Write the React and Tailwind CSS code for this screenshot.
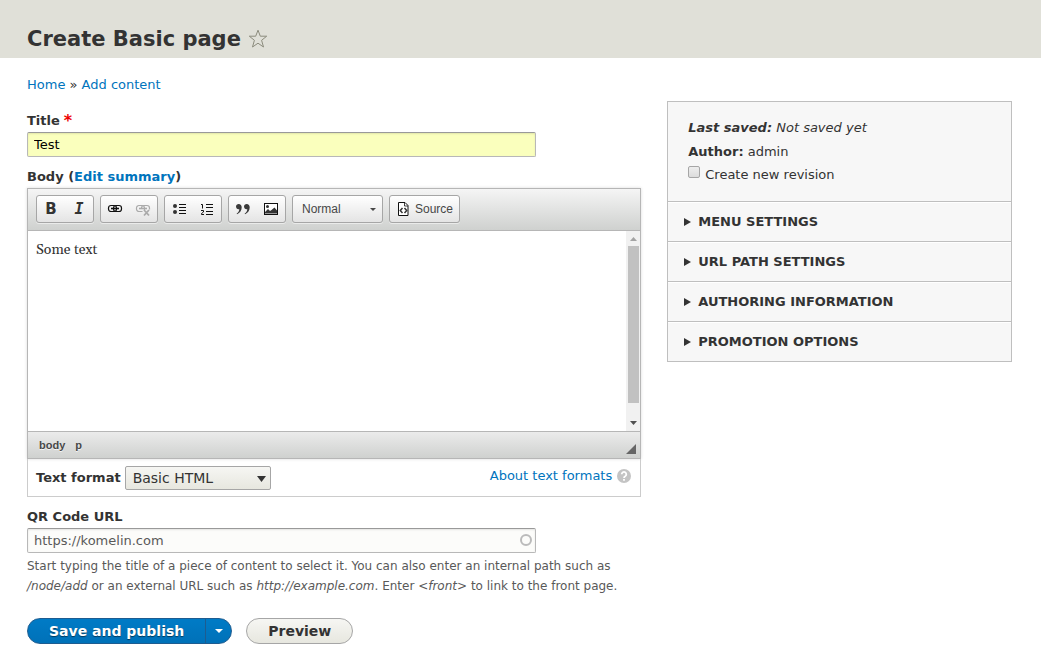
const sections = ['Menu settings', 'URL path settings', 'Authoring information', 'Promotion options']

const inputClass =
  'block w-full h-[25px] px-1.5 border border-[#b8b8b8] border-t-[#999] rounded-xs text-[13px] shadow-[inset_0_1px_2px_rgba(0,0,0,0.1)]'

function Icon({ children }) {
  return (
    <svg className="w-4 h-4" viewBox="0 0 16 16" fill="none" stroke="#111" aria-hidden="true">
      {children}
    </svg>
  )
}

function LinkIcon() {
  return (
    <Icon>
      <rect x="1.5" y="4.5" width="8" height="6" rx="2.5" strokeWidth="1.2" />
      <rect x="6.5" y="4.5" width="8" height="6" rx="2.5" strokeWidth="1.2" />
      <path d="M4 7.5h8" strokeWidth="1.6" />
    </Icon>
  )
}

function UnlinkIcon() {
  return (
    <Icon>
      <g stroke="#aaa" strokeWidth="1.2">
        <path d="M9.5 9V7A2.5 2.5 0 0 0 7 4.5H4a2.5 2.5 0 0 0-2.5 2.5v1A2.5 2.5 0 0 0 4 10.5h3.5" />
        <path d="M6.500 8V7A2.5 2.5 0 0 1 9 4.500h3A2.5 2.5 0 0 1 14.500 7v1.500" />
        <path d="M4 7.5h8" strokeWidth="1.6" />
        <path d="M9 9l5 5.5M14 9l-5 5.5" strokeWidth="1.8" />
      </g>
    </Icon>
  )
}

function BulletIcon() {
  return (
    <Icon>
      <circle cx="4" cy="5" r="2" fill="#333" stroke="none" />
      <circle cx="4" cy="11" r="2" fill="#333" stroke="none" />
      <path d="M8 3.5h7M8 6.5h7M8 9.5h7M8 12.5h7" />
    </Icon>
  )
}

function NumberedIcon() {
  return (
    <Icon>
      <path d="M2 3.500h1.500v4M2 9.500h2.500v1.500L2.500 12.500v1H5" />
      <path d="M7 3.500h7M7 6.500h7M7 10.500h7M7 13.500h7" />
    </Icon>
  )
}

function QuoteIcon() {
  return (
    <Icon>
      <g fill="#3a3a3a" stroke="none">
        <path d="M1 5.500C1 4 2.200 3 3.700 3 5.500 3 6.700 4.300 6.700 6.300 6.700 9.500 5 12 2 13.200L1.700 12.500C3.300 11.500 4.200 10 4.300 8.200 2.500 8.700 1 7.400 1 5.500Z" />
        <path d="M9 5.500C9 4 10.200 3 11.700 3 13.500 3 14.700 4.300 14.700 6.300 14.700 9.500 13 12 10 13.200L9.700 12.500C11.300 11.500 12.200 10 12.300 8.200 10.500 8.700 9 7.400 9 5.500Z" />
      </g>
    </Icon>
  )
}

function ImageIcon() {
  return (
    <Icon>
      <rect x="1.5" y="2.5" width="13" height="11" fill="#fff" />
      <circle cx="4.5" cy="5.5" r="1.5" fill="#333" stroke="none" />
      <path d="M2 12.500V11l3-3 2 2 1.500-1 3-2.500 2.500 3v3Z" fill="#333" stroke="none" />
    </Icon>
  )
}

function SourceIcon() {
  return (
    <Icon>
      <path d="M2.500 1.500h6.500l3 3v10h-9.500z" fill="#fff" />
      <path d="M8.500 2v3H12" strokeWidth=".8" />
      <path d="M6.500 7L4.300 9.500l2.200 2.500M8.500 7l2.200 2.500L8.500 12" strokeWidth="1.5" stroke="#333" />
    </Icon>
  )
}

function ToolGroup({ children }) {
  return (
    <div className="flex h-7 border border-[#a6a6a6] rounded-[3px] bg-linear-to-b from-white to-[#e4e4e4] shadow-[0_1px_0_rgba(255,255,255,0.5)]">
      {children}
    </div>
  )
}

function Tool({ label, children }) {
  return (
    <button type="button" title={label} aria-label={label} className="flex items-center justify-center w-7 text-[15px] leading-4 font-bold text-[#333]">
      {children}
    </button>
  )
}

function Editor() {
  return (
    <div className="border border-[#b6b6b6] shadow-[0_0_3px_rgba(0,0,0,0.15)]">
      <div className="flex flex-wrap gap-1.5 px-2 pt-1.5 pb-[7px] border-b border-[#b6b6b6] bg-linear-to-b from-[#f5f5f5] to-[#cfd1cf]">
        <ToolGroup>
          <Tool label="Bold">B</Tool>
          <Tool label="Italic"><i className="font-['DejaVu_Sans_Mono',monospace]">I</i></Tool>
        </ToolGroup>
        <ToolGroup>
          <Tool label="Link"><LinkIcon /></Tool>
          <Tool label="Unlink"><UnlinkIcon /></Tool>
        </ToolGroup>
        <ToolGroup>
          <Tool label="Bulleted list"><BulletIcon /></Tool>
          <Tool label="Numbered list"><NumberedIcon /></Tool>
        </ToolGroup>
        <ToolGroup>
          <Tool label="Block quote"><QuoteIcon /></Tool>
          <Tool label="Image"><ImageIcon /></Tool>
        </ToolGroup>
        <ToolGroup>
          <div className="relative flex">
            <select aria-label="Paragraph format" className="appearance-none w-[89px] px-[9px] font-['Liberation_Sans',sans-serif] text-[12px] text-[#474747]">
              <option>Normal</option>
            </select>
            <svg className="absolute right-1.5 top-3 w-[6px] h-[3px] pointer-events-none" viewBox="0 0 6 3">
              <path d="M0 0h6L3 3z" fill="#474747" />
            </svg>
          </div>
        </ToolGroup>
        <ToolGroup>
          <button type="button" className="flex items-center gap-[3px] px-1.5 font-['Liberation_Sans',sans-serif] text-[12px] text-[#474747]">
            <SourceIcon />
            Source
          </button>
        </ToolGroup>
      </div>
      <div className="flex h-[200px]">
        <textarea
          aria-label="Body"
          defaultValue="Some text"
          className="flex-1 resize-none overflow-hidden px-2 py-[9px] font-[Gelasio,Georgia,'Liberation_Serif',serif] text-[14px] leading-5 text-[#333]"
        />
        <div className="flex flex-col items-center w-3.5 bg-[#f1f1f1] pl-px" aria-hidden="true">
          <svg className="w-[7px] h-[15px]" viewBox="0 0 7 15"><path d="M0 10h7L3.5 6z" fill="#a3a3a3" /></svg>
          <div className="w-[11px] h-[157px] bg-[#c1c1c1]" />
          <svg className="w-[7px] h-4 mt-auto" viewBox="0 0 7 16"><path d="M0 6h7L3.5 10z" fill="#505050" /></svg>
        </div>
      </div>
      <div className="flex justify-between h-[27px] pl-[11px] pr-1 border-t border-[#b6b6b6] bg-linear-to-b from-[#ebebeb] to-[#cfd1cf]">
        <div className="flex items-center gap-2.5 font-['Liberation_Sans',sans-serif] text-[11px] font-bold text-[#484848] [text-shadow:0_1px_0_rgba(255,255,255,0.75)]">
          <span>body</span>
          <span>p</span>
        </div>
        <svg className="self-end mb-1 w-2.5 h-2.5" viewBox="0 0 10 10" aria-hidden="true">
          <path d="M10 0v10H0z" fill="#666" />
        </svg>
      </div>
    </div>
  )
}

function TextFormat() {
  return (
    <div className="flex justify-between h-[38px] pl-2 pr-[9px] pt-[7px] border border-t-0 border-[#ccc]">
      <div className="flex items-center h-6 gap-1">
        <label htmlFor="format" className="font-bold">Text format</label>
        <div className="relative flex">
          <select id="format" className="appearance-none w-[146px] h-6 px-[7px] border border-[#a6a6a6] rounded-xs bg-linear-to-b from-[#f6f6f3] to-[#e7e7df] text-[14px] text-[#333]">
            <option>Basic HTML</option>
          </select>
          <svg className="absolute right-[5px] top-2.5 w-[9px] h-[6px] pointer-events-none" viewBox="0 0 9 6">
            <path d="M0 0h9L4.5 6z" fill="#333" />
          </svg>
        </div>
      </div>
      <a href="#formats" className="flex items-center gap-[5px] h-5 text-[#0074bd]">
        About text formats
        <svg className="w-3.5 h-3.5" viewBox="0 0 14 14" aria-hidden="true">
          <circle cx="7" cy="7" r="7" fill="#c4c4c4" />
          <path d="M4.700 5.200a2.300 2.300 0 1 1 3.500 2Q7 7.800 7 8.900M7 10v1.800" fill="none" stroke="#fff" strokeWidth="1.8" />
        </svg>
      </a>
    </div>
  )
}

function Sidebar() {
  return (
    <aside className="w-[35%] mt-4 border border-[#bfbfbf] bg-[#f7f7f7]">
      <div className="h-[99px] px-5 pt-3.5">
        <p className="leading-6 italic"><b>Last saved:</b> Not saved yet</p>
        <p className="leading-6"><b>Author:</b> admin</p>
        <div className="flex gap-[5px] leading-[22px]">
          <input
            id="revision"
            type="checkbox"
            className="appearance-none w-3 h-3 mt-0.5 border border-[#a6a6a6] rounded-xs bg-linear-to-b from-[#eee] to-[#dcdcdc]"
          />
          <label htmlFor="revision">Create new revision</label>
        </div>
      </div>
      {sections.map((name) => (
        <details key={name} className="border-t border-[#bfbfbf] shadow-[inset_0_1px_0_#fff]">
          <summary className="flex items-center gap-[7px] h-[39px] px-4 font-bold uppercase list-none">
            <svg className="w-[7px] h-2" viewBox="0 0 7 8" aria-hidden="true">
              <path d="M0 0l7 4-7 4z" fill="#333" />
            </svg>
            {name}
          </summary>
        </details>
      ))}
    </aside>
  )
}

export default function App() {
  return (
    <div className="min-h-screen bg-white font-['DejaVu_Sans',sans-serif] text-[13px] leading-5 text-[#333]">
      <header className="flex items-center gap-[7px] h-[58px] pl-[27px] pt-5 bg-[#e0e0d8]">
        <h1 className="text-[21px] leading-7 font-bold">Create Basic page</h1>
        <button type="button" aria-label="Add to shortcuts">
          <svg className="block w-5 h-5" viewBox="0 0 20 20" fill="none" stroke="#8c8c7d">
            <path d="M10 1.200l2.300 6h6.400l-5.100 4.100 1.900 6.700L10 14.200 4.500 18l1.900-6.700L1.300 7.200h6.400z" />
          </svg>
        </button>
      </header>

      <div className="pl-[27px] pr-[29px] pt-[17px]">
        <nav className="h-5">
          <a href="#home" className="text-[#0074bd]">Home</a> » <a href="#add" className="text-[#0074bd]">Add content</a>
        </nav>

        <div className="flex items-start gap-[26px] -mt-[10px]">
          <form className="flex-1 min-w-0 pt-[26px]">
            <div className="max-w-[509px]">
              <label htmlFor="title" className="flex gap-1 h-[21px] font-bold">
                Title <span className="text-[16px] text-[#e00]">*</span>
              </label>
              <input id="title" type="text" defaultValue="Test" className={`${inputClass} bg-[#faffbd] text-black`} />
            </div>

            <div className="mt-2.5 h-[21px] font-bold">
              Body (<button type="button" className="font-bold text-[#0074bd]">Edit summary</button>)
            </div>
            <Editor />
            <TextFormat />

            <div className="max-w-[509px] mt-2.5">
              <label htmlFor="qr" className="block h-[21px] font-bold">QR Code URL</label>
              <div className="relative">
                <input id="qr" type="text" defaultValue="https://komelin.com" className={`${inputClass} bg-[#fcfcfa] text-[#595959]`} />
                <span className="absolute right-1 top-1.5 w-3 h-3 border-2 border-[#bbb] rounded-full" />
              </div>
            </div>
            <p className="mt-[3px] text-[12px] text-[#595959]">
              Start typing the title of a piece of content to select it. You can also enter an internal path such as{' '}
              <em>/node/add</em> or an external URL such as <em>http://example.com</em>. Enter <em>&lt;front&gt;</em> to link to the front page.
            </p>

            <div className="flex gap-3.5 mt-[22px] text-[14px] font-bold">
              <div className="flex h-[26px] border border-[#1e5c90] rounded-full overflow-hidden bg-linear-to-b from-[#007bc6] to-[#0071b8] text-white">
                <button type="button" className="px-[21px] [text-shadow:0_1px_1px_rgba(0,0,0,0.5)]">Save and publish</button>
                <button type="button" aria-label="More save actions" className="flex items-center justify-center w-[26px] border-l border-[#1e5c90]">
                  <svg className="w-2 h-1" viewBox="0 0 8 4"><path d="M0 0h8L4 4z" fill="#fff" /></svg>
                </button>
              </div>
              <button type="button" className="h-[26px] px-[21px] border border-[#a6a6a6] rounded-full bg-linear-to-b from-[#f6f6f3] to-[#e7e7df] text-[#333]">
                Preview
              </button>
            </div>
          </form>
          <Sidebar />
        </div>
      </div>
    </div>
  )
}
